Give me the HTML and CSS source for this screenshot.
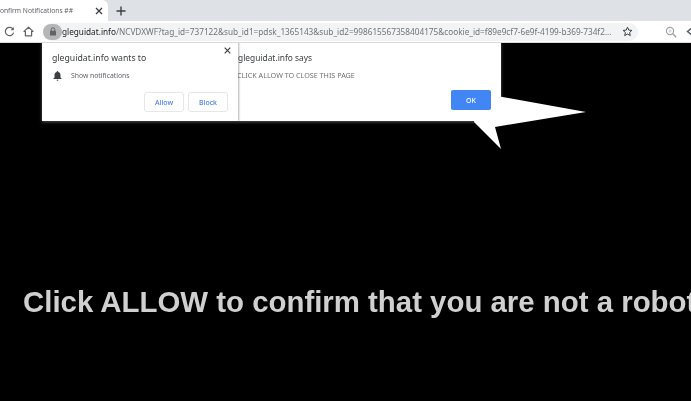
FILE: index.html
```html
<!DOCTYPE html>
<html lang="en">
<head>
<meta charset="utf-8">
<title>Confirm Notifications ##</title>
<link rel="stylesheet" href="styles.css">
</head>
<body>
<div class="browser">
  <div class="tabstrip">
    <div class="tab">
      <span class="tab-title">Confirm Notifications ##</span>
      <svg class="tab-close" width="8" height="8" viewBox="0 0 8 8"><path d="M1 1l6 6M7 1l-6 6" stroke="#3c4043" stroke-width="1.3" fill="none"/></svg>
    </div>
    <svg class="new-tab" width="10" height="10" viewBox="0 0 10 10"><path d="M5 .5v9M.5 5h9" stroke="#3c4043" stroke-width="1.4" fill="none"/></svg>
  </div>
  <div class="toolbar">
    <svg class="tool reload" width="11" height="11" viewBox="0 0 11 11"><path d="M9.2 3.4A4.2 4.2 0 1 0 9.6 6.6" stroke="#5f6368" stroke-width="1.2" fill="none"/><path d="M9.8 .9v3.3H6.6z" fill="#5f6368"/></svg>
    <svg class="tool home" width="11" height="11" viewBox="0 0 11 11"><path d="M5.5 1.2L1 5.400h1.400v4.400h6.200V5.400H10z" stroke="#5f6368" stroke-width="1.2" fill="none" stroke-linejoin="round"/></svg>
    <div class="omnibox">
      <span class="lock-chip"><svg width="8" height="9" viewBox="0 0 8 9"><path d="M2.2 4V2.600a1.800 1.800 0 0 1 3.600 0V4" stroke="#5f6368" stroke-width="1" fill="none"/><rect x="1" y="3.800" width="6" height="4.800" rx=".7" fill="#5f6368"/></svg></span>
      <span class="url"><span class="host">gleguidat.info</span>/NCVDXWF?tag_id=737122&amp;sub_id1=pdsk_1365143&amp;sub_id2=998615567358404175&amp;cookie_id=f89e9cf7-6e9f-4199-b369-734f2...</span>
      <svg class="star" width="11" height="11" viewBox="0 0 11 11"><path d="M5.500 1.200l1.300 2.900 3.100.3-2.300 2.100.7 3.100-2.800-1.600-2.800 1.600.7-3.100L1.100 4.400l3.100-.3z" stroke="#3c4043" stroke-width="1" fill="none" stroke-linejoin="round"/></svg>
    </div>
    <svg class="zoom-icon" width="12" height="12" viewBox="0 0 12 12"><circle cx="5" cy="5" r="3.600" stroke="#9aa0a6" stroke-width="1.100" fill="none"/><path d="M7.600 7.600l3.600 3.600" stroke="#9aa0a6" stroke-width="1.400"/><path d="M3.200 5h3.600M5 3.200v3.600" stroke="#c4c7ca" stroke-width=".8"/></svg>
    <svg class="edge-icon" width="7" height="9" viewBox="0 0 7 9"><path d="M6 1L1.500 4.500 6 8" stroke="#5f6368" stroke-width="1.500" fill="none"/></svg>
  </div>
  <main class="page">
    <h1 class="headline">Click ALLOW to confirm that you are not a robot</h1>

    <svg class="arrow" width="120" height="60" viewBox="0 0 120 60"><path d="M10 0L116 19 25 34 31 56 4 29z" fill="#fff"/></svg>

    <section class="alert">
      <p class="alert-title">gleguidat.info says</p>
      <p class="alert-text">CLICK ALLOW TO CLOSE THIS PAGE</p>
      <div class="alert-actions"><button class="ok">OK</button></div>
    </section>

    <section class="prompt">
      <svg class="prompt-close" width="7" height="7" viewBox="0 0 7 7"><path d="M.7.7l5.600 5.600M6.300.7L.7 6.300" stroke="#3c4043" stroke-width="1.200" fill="none"/></svg>
      <p class="prompt-title">gleguidat.info wants to</p>
      <div class="prompt-row">
        <svg width="9" height="10" viewBox="0 0 9 10"><path d="M4.500 0a1 1 0 0 1 .8 1C7 1.400 7.500 2.800 7.500 4.300v2.200L9 8H0l1.500-1.500V4.300C1.500 2.800 2 1.400 3.700 1A1 1 0 0 1 4.500 0zM3.500 8.700h2a1 1 0 0 1-2 0z" fill="#3c4043"/></svg>
        <span>Show notifications</span>
      </div>
      <div class="prompt-actions">
        <button class="choice">Allow</button>
        <button class="choice">Block</button>
      </div>
    </section>
  </main>
</div>
</body>
</html>
```
FILE: styles.css
```css
* { box-sizing: border-box; }
html, body { margin: 0; padding: 0; }
body { background: #000; font-family: "Noto Sans", "Roboto", sans-serif; }
.browser { width: 691px; height: 401px; display: flex; flex-direction: column; overflow: hidden; filter: blur(.3px); }

.tabstrip { height: 21px; background: #dee1e6; display: flex; align-items: center; flex: none; }
.tab { width: 108px; height: 21px; background: #fff; border-top-right-radius: 6px; display: flex; align-items: center; justify-content: flex-end; overflow: hidden; padding-right: 5px; flex: none; }
.tab-title { font-size: 6.7px; color: #5f6368; white-space: nowrap; flex: none; margin-right: 23px; }
.tab-close { flex: none; margin-left: -1px; }
.new-tab { margin-left: 8px; }

.toolbar { height: 22px; background: #fff; display: flex; align-items: center; flex: none; overflow: hidden; border-bottom: 1px solid #d8d9db; padding-left: 4px; }
.tool { flex: none; }
.reload { margin-right: 8px; }
.home { margin-right: 9px; }
.omnibox { width: 595px; height: 18px; background: #f1f3f4; border-radius: 9px; display: flex; align-items: center; flex: none; }
.lock-chip { width: 19px; height: 16px; margin-left: 0; border-radius: 8px; background: #b4b6b8; display: flex; align-items: center; justify-content: center; flex: none; }
.url { font-size: 8.23px; color: #70757a; white-space: nowrap; margin-left: 0; flex: none; }
.host { color: #202124; }
.star { margin-left: auto; margin-right: 5px; flex: none; }
.zoom-icon { margin-left: 27px; flex: none; }
.edge-icon { margin-left: 9px; flex: none; }

.page { position: relative; flex: 1; background: #000; overflow: hidden; padding: 243px 0 0 23px; }
.headline { margin: 0; font-family: "Liberation Sans", Arial, sans-serif; font-weight: 700; font-size: 29.4px; line-height: 32px; color: #d0d0d0; white-space: nowrap; }

.arrow { position: absolute; left: 470px; top: 50px; }

.alert { position: absolute; left: 42px; top: -2px; width: 459px; height: 80px; background: #fff; box-shadow: 0 1px 3px rgba(255,255,255,.35); padding: 10px 10px 0 196px; }
.alert-title { margin: 0; font-size: 8.4px; line-height: 13px; color: #3c4043; }
.alert-text { margin: 5px 0 0 -1px; font-size: 7.2px; line-height: 12px; color: #6b6f73; }
.alert-actions { display: flex; justify-content: flex-end; margin-top: 9px; }
.ok { width: 40px; height: 20px; border: 0; border-radius: 2px; background: #4285f4; color: #fff; font: 500 7px "Noto Sans", sans-serif; padding: 0; }

.prompt { position: absolute; left: 42px; top: -2px; width: 196px; height: 80px; background: #fff; box-shadow: 1px 0 2px rgba(0,0,0,.3); padding: 11px 10px 0 10px; }
.prompt-close { position: absolute; right: 7px; top: 6px; }
.prompt-title { margin: 0; font-size: 8.7px; line-height: 13px; color: #3c4043; }
.prompt-row { display: flex; align-items: center; gap: 9px; margin-top: 5px; font-size: 6.8px; line-height: 11px; color: #5f6368; padding-left: 1px; }
.prompt-actions { display: flex; justify-content: flex-end; gap: 4px; margin-top: 11px; }
.choice { width: 40px; height: 20px; background: #fff; border: 1px solid #e6e7e9; border-radius: 3px; color: #4a80e0; font: 500 7px "Noto Sans", sans-serif; padding: 0; }
```
